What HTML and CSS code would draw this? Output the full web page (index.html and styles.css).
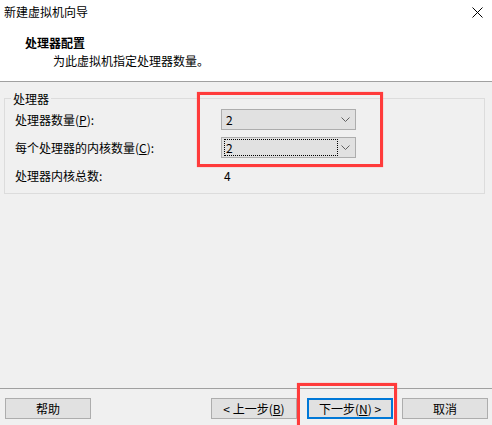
FILE: index.html
```html
<!DOCTYPE html>
<html lang="zh-CN">
<head>
<meta charset="utf-8">
<title>新建虚拟机向导</title>
<link rel="stylesheet" href="styles.css">
</head>
<body>
<div class="window">
  <div class="titlebar">
    <span class="title">新建虚拟机向导</span>
    <svg class="close" width="11" height="11" viewBox="0 0 11 11"><path d="M0.5 0.5 L10.5 10.5 M10.5 0.5 L0.5 10.5" stroke="#000" stroke-width="1" fill="none"/></svg>
  </div>
  <div class="header">
    <div class="h-title">处理器配置</div>
    <div class="h-sub">为此虚拟机指定处理器数量。</div>
  </div>
  <div class="content">
    <div class="group">
      <span class="legend">处理器</span>
      <div class="form">
        <span class="label">处理器数量(<u>P</u>):</span>
        <div class="combo"><span class="val">2</span><svg class="chev" width="9" height="5" viewBox="0 0 9 5"><path d="M0.5 0.5 L4.5 4.5 L8.5 0.5" stroke="#606060" fill="none"/></svg></div>
        <span class="label">每个处理器的内核数量(<u>C</u>):</span>
        <div class="combo"><span class="val focus">2</span><svg class="chev" width="9" height="5" viewBox="0 0 9 5"><path d="M0.5 0.5 L4.5 4.5 L8.5 0.5" stroke="#606060" fill="none"/></svg></div>
        <span class="label total">处理器内核总数:</span>
        <span class="total-val">4</span>
      </div>
      <div class="mark mark-combos"></div>
    </div>
  </div>
  <div class="footer">
    <button class="btn">帮助</button>
    <div class="spacer"></div>
    <button class="btn">&lt; 上一步(<u>B</u>)</button>
    <div class="next-wrap">
      <button class="btn primary">下一步(<u>N</u>) &gt;</button>
      <div class="mark mark-next"></div>
    </div>
    <button class="btn">取消</button>
  </div>
</div>
</body>
</html>
```
FILE: styles.css
```css
* { box-sizing: border-box; }
html, body { margin: 0; padding: 0; }
body {
  width: 492px;
  height: 425px;
  overflow: hidden;
  font-family: "Noto Sans CJK SC", "Noto Sans", sans-serif;
  font-size: 12px;
  color: #000;
  background: #f0f0f0;
}
.window {
  display: flex;
  flex-direction: column;
  height: 425px;
}
.titlebar {
  height: 24px;
  background: #fff;
  display: flex;
  align-items: center;
  justify-content: space-between;
  padding: 0 9px 0 4px;
  line-height: 16px;
}
.close { display: block; margin-top: 1px; }
.header {
  background: #fff;
  height: 58px;
  padding: 10px 0 0 25px;
  border-bottom: 1px solid #a0a0a0;
  line-height: 18px;
}
.h-title { font-weight: bold; }
.h-sub { padding-left: 28px; }
.content {
  flex: 1;
  padding: 16px 7px 0 4px;
}
.group {
  position: relative;
  border: 1px solid #dcdcdc;
  display: flex;
  flex-direction: column;
  align-items: flex-start;
  padding: 0 0 6px 10px;
}
.legend {
  margin: -8px 0 0 -4px;
  padding: 0 2px;
  background: #f0f0f0;
  line-height: 16px;
}
.form {
  margin-top: 2px;
  display: grid;
  grid-template-columns: 206px 135px;
  grid-template-rows: 21px 21px 22px;
  row-gap: 7px;
  align-items: center;
}
.label { line-height: 16px; }
.label.total { line-height: 22px; }
.total-val { line-height: 22px; padding-left: 3px; }
.combo {
  height: 21px;
  border: 1px solid #adadad;
  background: #e1e1e1;
  display: flex;
  align-items: center;
  justify-content: space-between;
  padding: 0 5px 0 2px;
}
.val {
  line-height: 15px;
  padding-left: 2px;
  height: 17px;
  display: flex;
  align-items: center;
}
.val.focus {
  width: 114px;
  border: 1px dotted #000;
  padding-left: 1px;
}
.chev { display: block; }
.mark {
  position: absolute;
  border: 3px solid #ff3b3b;
  box-shadow: 0 0 1px #ff8080;
  pointer-events: none;
}
.mark-combos {
  left: 192px;
  top: -7px;
  width: 186px;
  height: 75px;
}
.footer {
  height: 37px;
  border-top: 1px solid #a0a0a0;
  display: flex;
  align-items: flex-start;
  padding: 9px 4px 0 5px;
}
.spacer { flex: 1; }
.btn {
  width: 86px;
  height: 21px;
  border: 1px solid #adadad;
  background: #e1e1e1;
  font: inherit;
  color: #000;
  padding: 0;
  line-height: 17px;
  margin: 0;
}
.btn.primary {
  border: 2px solid #0078d7;
}
.next-wrap {
  position: relative;
  margin: 0 9px 0 10px;
}
.next-wrap .btn { display: block; }
.mark-next {
  left: -10px;
  top: -15px;
  width: 100px;
  height: 50px;
}
u { text-decoration: underline; text-underline-offset: 1px; }
```
